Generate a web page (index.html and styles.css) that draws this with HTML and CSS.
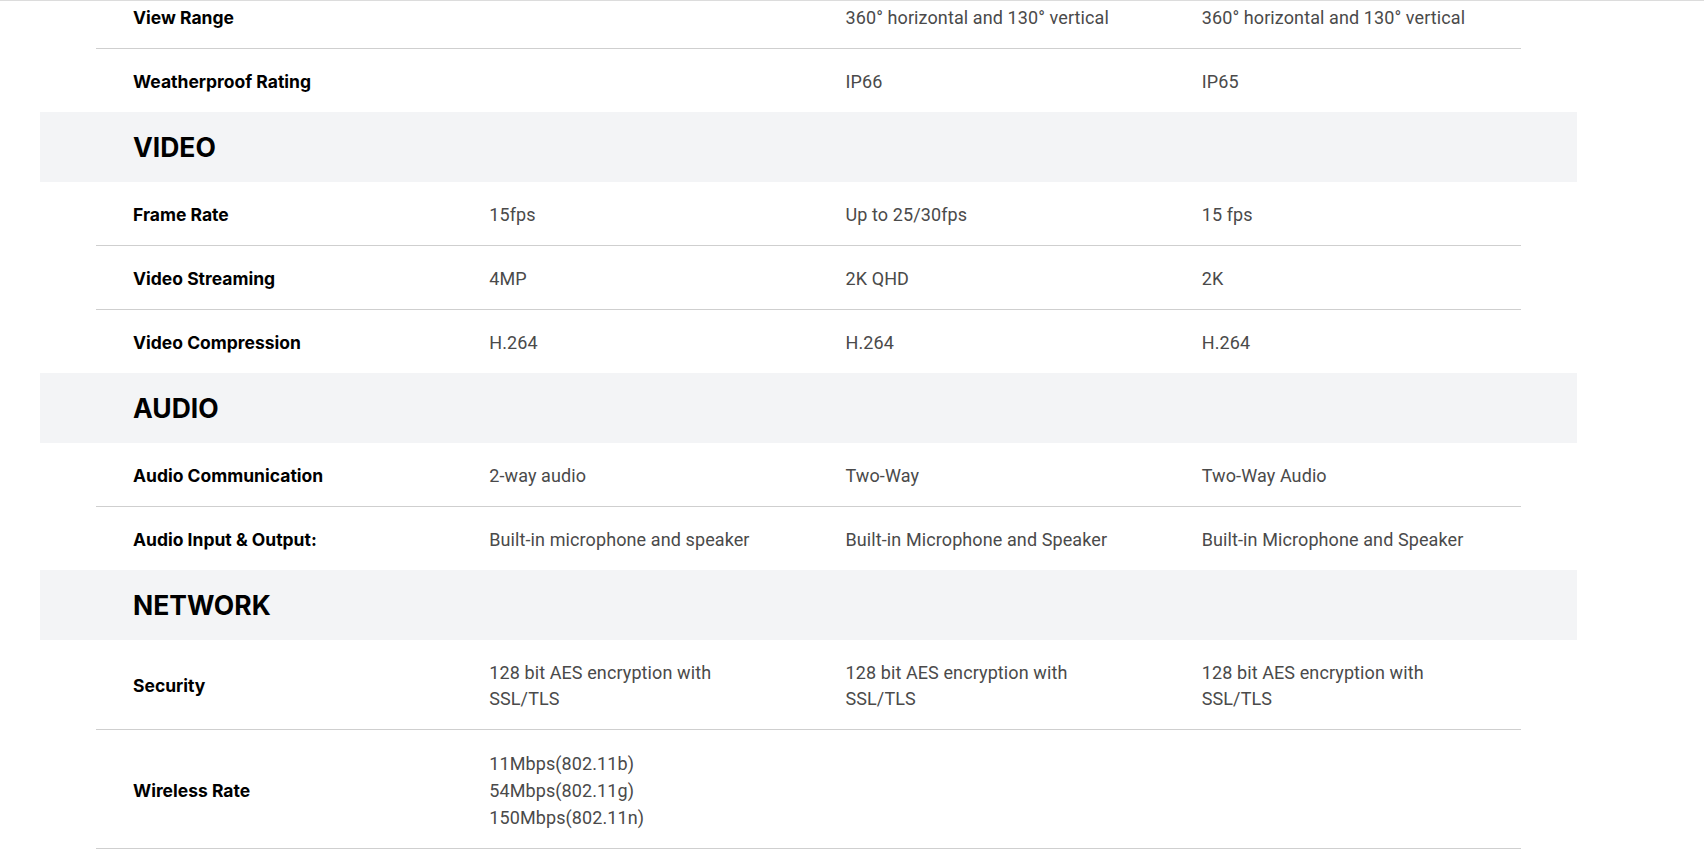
FILE: index.html
```html
<!DOCTYPE html>
<html lang="en">
<head>
<meta charset="utf-8">
<title>Specifications</title>
<link rel="stylesheet" href="styles.css">
</head>
<body>
<div class="top-rule"></div>
<div class="spec">
  <div class="group">
    <div class="row row-cut">
      <div class="label">View Range</div>
      <div class="value"></div>
      <div class="value">360° horizontal and 130° vertical</div>
      <div class="value">360° horizontal and 130° vertical</div>
    </div>
    <div class="row">
      <div class="label">Weatherproof Rating</div>
      <div class="value"></div>
      <div class="value">IP66</div>
      <div class="value">IP65</div>
    </div>
  </div>

  <h2 class="section">VIDEO</h2>
  <div class="group">
    <div class="row">
      <div class="label">Frame Rate</div>
      <div class="value">15fps</div>
      <div class="value">Up to 25/30fps</div>
      <div class="value">15 fps</div>
    </div>
    <div class="row">
      <div class="label">Video Streaming</div>
      <div class="value">4MP</div>
      <div class="value">2K QHD</div>
      <div class="value">2K</div>
    </div>
    <div class="row">
      <div class="label">Video Compression</div>
      <div class="value">H.264</div>
      <div class="value">H.264</div>
      <div class="value">H.264</div>
    </div>
  </div>

  <h2 class="section">AUDIO</h2>
  <div class="group">
    <div class="row">
      <div class="label">Audio Communication</div>
      <div class="value">2-way audio</div>
      <div class="value">Two-Way</div>
      <div class="value">Two-Way Audio</div>
    </div>
    <div class="row">
      <div class="label">Audio Input &amp; Output:</div>
      <div class="value">Built-in microphone and speaker</div>
      <div class="value">Built-in Microphone and Speaker</div>
      <div class="value">Built-in Microphone and Speaker</div>
    </div>
  </div>

  <h2 class="section">NETWORK</h2>
  <div class="group">
    <div class="row">
      <div class="label">Security</div>
      <div class="value">128 bit AES encryption with<br>SSL/TLS</div>
      <div class="value">128 bit AES encryption with<br>SSL/TLS</div>
      <div class="value">128 bit AES encryption with<br>SSL/TLS</div>
    </div>
    <div class="row row-open">
      <div class="label">Wireless Rate</div>
      <div class="value value-list">11Mbps(802.11b)<br>54Mbps(802.11g)<br>150Mbps(802.11n)</div>
      <div class="value"></div>
      <div class="value"></div>
    </div>
  </div>
</div>
</body>
</html>
```

FILE: styles.css
```css
* {
  box-sizing: border-box;
}

html, body {
  margin: 0;
  padding: 0;
  background: #ffffff;
}

body {
  font-family: Roboto, "Liberation Sans", sans-serif;
  color: #000;
  overflow: hidden;
}

.top-rule {
  height: 1px;
  background: #dcdcdc;
}

.spec {
  margin-left: 40px;
  width: 1537px;
}

.group {
  padding: 0 56px;
}

.row {
  display: grid;
  grid-template-columns: repeat(4, 1fr);
  align-items: center;
  padding: 20px 0 17px;
  border-bottom: 1px solid #cfcfcf;
}

.group .row:last-child {
  border-bottom: none;
}

.group .row.row-open {
  border-bottom: 1px solid #cfcfcf;
  padding-bottom: 17px;
}

.row-cut {
  padding-top: 4px;
  padding-bottom: 17px;
}

.label,
.value {
  padding-left: 37px;
  line-height: 26px;
}

.label {
  font-family: Inter, Roboto, "Liberation Sans", sans-serif;
  font-size: 17.5px;
  font-weight: 700;
  color: #000;
}

.value {
  font-size: 18px;
  letter-spacing: 0.1px;
  color: #4a4a4a;
}

.value-list {
  line-height: 27px;
}

.section {
  margin: 0;
  height: 70px;
  display: flex;
  align-items: center;
  padding-left: 93px;
  background: #f3f4f6;
  font-family: Inter, Roboto, "Liberation Sans", sans-serif;
  font-size: 26.5px;
  font-weight: 700;
  color: #000;
}
```
